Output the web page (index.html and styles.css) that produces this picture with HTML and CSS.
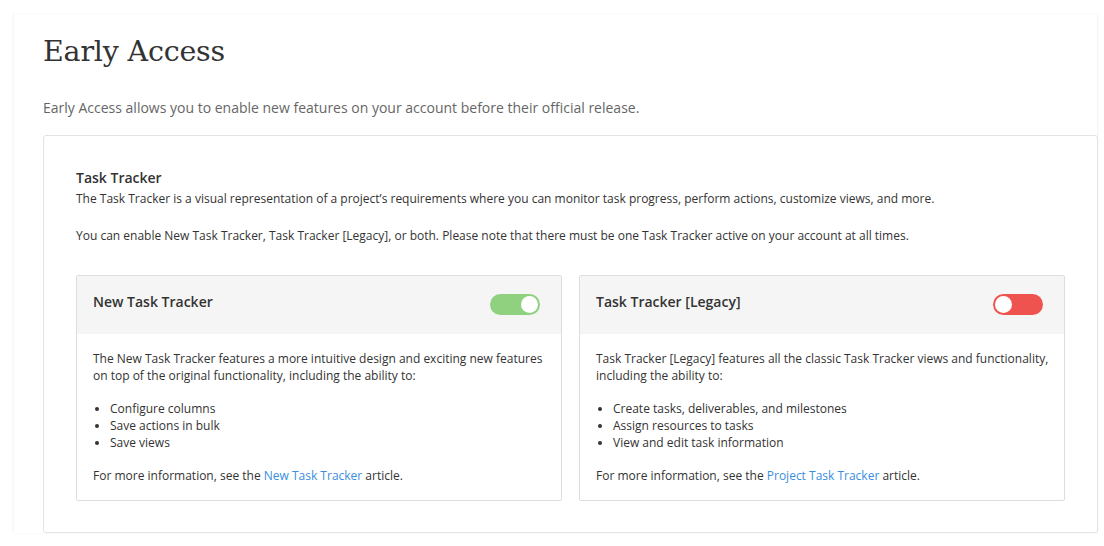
FILE: index.html
```html
<!DOCTYPE html>
<html>
<head>
<meta charset="utf-8">
<link rel="stylesheet" href="styles.css">
</head>
<body>
<div class="page">
  <h1 class="title">Early Access</h1>
  <p class="lead">Early Access allows you to enable new features on your account before their official release.</p>
  <section class="panel">
    <h2 class="panel-title">Task Tracker</h2>
    <p class="panel-text">The Task Tracker is a visual representation of a project’s requirements where you can monitor task progress, perform actions, customize views, and more.</p>
    <p class="panel-text second">You can enable New Task Tracker, Task Tracker [Legacy], or both. Please note that there must be one Task Tracker active on your account at all times.</p>
    <div class="cards">
      <div class="card">
        <div class="card-head">
          <span class="card-title">New Task Tracker</span>
          <span class="toggle on"><span class="knob"></span></span>
        </div>
        <div class="card-body">
          <p>The New Task Tracker features a more intuitive design and exciting new features on top of the original functionality, including the ability to:</p>
          <ul>
            <li>Configure columns</li>
            <li>Save actions in bulk</li>
            <li>Save views</li>
          </ul>
          <p>For more information, see the <a href="#">New Task Tracker</a> article.</p>
        </div>
      </div>
      <div class="card">
        <div class="card-head">
          <span class="card-title">Task Tracker [Legacy]</span>
          <span class="toggle off"><span class="knob"></span></span>
        </div>
        <div class="card-body">
          <p>Task Tracker [Legacy] features all the classic Task Tracker views and functionality, including the ability to:</p>
          <ul>
            <li>Create tasks, deliverables, and milestones</li>
            <li>Assign resources to tasks</li>
            <li>View and edit task information</li>
          </ul>
          <p>For more information, see the <a href="#">Project Task Tracker</a> article.</p>
        </div>
      </div>
    </div>
  </section>
</div>
</body>
</html>
```

FILE: styles.css
```css
html, body {
  margin: 0;
  padding: 0;
  background: #fff;
}
body {
  font-family: "Open Sans", "Liberation Sans", sans-serif;
  color: #333;
  padding: 14px 6px 13px 13px;
}
.page {
  box-shadow: 0 0 2px rgba(0,0,0,0.05);
  border-left: 1px solid #f6f6f6;
  border-right: 1px solid #f6f6f6;
  padding: 18px 0 0 29px;
  height: 519px;
  box-sizing: border-box;
}
.title {
  font-family: "DejaVu Serif", "Liberation Serif", serif;
  font-weight: 300;
  font-size: 28.5px;
  line-height: 40px;
  margin: 0;
  color: #333;
  letter-spacing: -0.2px;
}
.lead {
  font-size: 14px;
  color: #666;
  margin: 26px 0 0;
  line-height: 20px;
}
.panel {
  margin-top: 17px;
  border: 1px solid #e3e3e3;
  border-radius: 3px;
  padding: 33px 32px 32px 32px;
  margin-right: -1px;
  box-sizing: border-box;
  height: 398px;
}
.panel-title {
  font-size: 14px;
  font-weight: 600;
  margin: 0;
  line-height: 18px;
  color: #333;
}
.panel-text {
  font-size: 12px;
  line-height: 18px;
  margin: 3px 0 0;
  color: #333;
}
.panel-text.second {
  margin-top: 19px;
}
.cards {
  display: grid;
  grid-template-columns: 1fr 1fr;
  gap: 17px;
  margin-top: 30px;
}
.card {
  border: 1px solid #ddd;
  border-radius: 2px;
}
.card-head {
  background: #f5f5f5;
  height: 58px;
  display: flex;
  align-items: center;
  justify-content: space-between;
  padding: 0 21px 0 16px;
}
.card-title {
  font-size: 14px;
  font-weight: 600;
  color: #333;
  margin-top: -8px;
}
.toggle {
  width: 50px;
  height: 21px;
  border-radius: 11px;
  display: flex;
  align-items: center;
  padding: 0 2px;
  box-sizing: border-box;
  margin-top: -1px;
}
.toggle .knob {
  width: 17px;
  height: 17px;
  border-radius: 50%;
  background: #fff;
}
.toggle.on {
  background: #8fd17e;
  justify-content: flex-end;
}
.toggle.off {
  background: #ee5350;
  justify-content: flex-start;
}
.card-body {
  padding: 16px 12px 16px 16px;
  font-size: 12px;
  line-height: 17px;
  color: #333;
}
.card-body p {
  margin: 0;
}
.card-body ul {
  margin: 16px 0 16px;
  padding-left: 17px;
}
.card-body a {
  color: #3a8ede;
  text-decoration: none;
}
```
